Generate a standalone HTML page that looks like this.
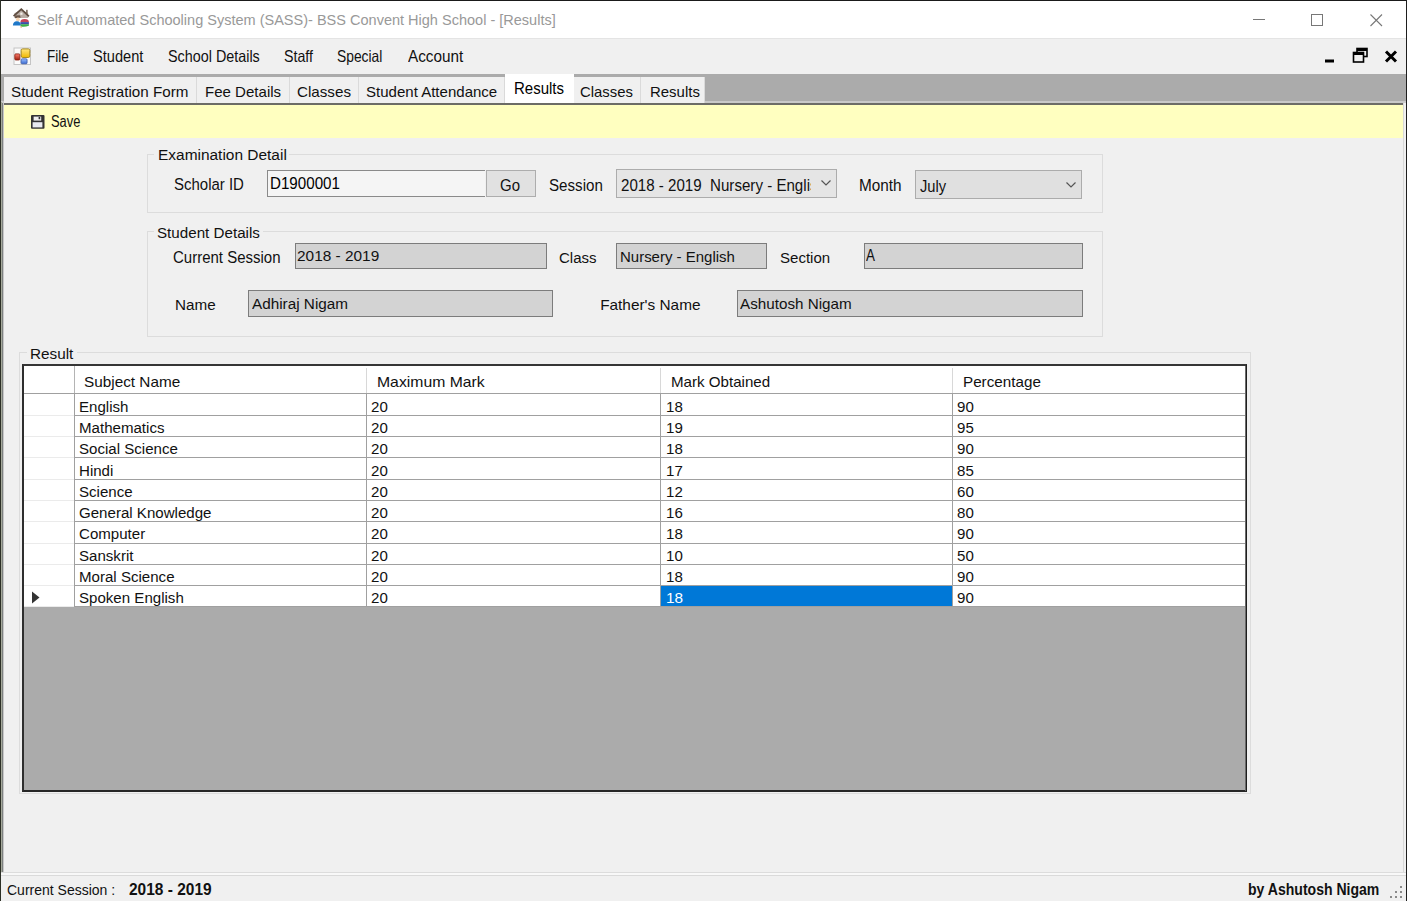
<!DOCTYPE html>
<html><head><meta charset="utf-8"><title>SASS Results</title>
<style>
html,body{margin:0;padding:0;}
body{width:1407px;height:901px;overflow:hidden;position:relative;background:#f0f0f0;font-family:"Liberation Sans",sans-serif;}
.r{position:absolute;}
.t{position:absolute;white-space:pre;transform-origin:0 0;}
</style></head><body>
<div class="r" style="left:0px;top:0px;width:1407px;height:39px;background:#fff;"></div>
<div class="r" style="left:1px;top:74px;width:1405px;height:800px;background:#ababab;"></div>
<div class="r" style="left:1px;top:38px;width:1405px;height:1px;background:#e4e4e4;"></div>
<svg class="r" style="left:0px;top:0px" width="40" height="38" viewBox="0 0 40 38">
<path d="M14.3 13.2 L14.3 18 L28.2 18 L28.2 13.2 L21.3 9.8 Z" fill="#b8aca4"/>
<path d="M13.6 16.2 L21.3 9.2 L28.9 16.4" fill="none" stroke="#5e4c40" stroke-width="1.8"/>
<rect x="26.2" y="9.8" width="1.4" height="3.8" fill="#6e5a4c"/>
<rect x="20.3" y="12.6" width="2.2" height="2.2" fill="#f4f0ea"/>
<path d="M15.2 15.6 L19.8 15.2 L20.8 17.4 L15 18.2 Z" fill="#6a5446"/>
<circle cx="17.9" cy="19.4" r="1.9" fill="#f3d4b4"/>
<path d="M12.9 25.6 Q12.9 21.4 16.9 21.2 Q20.9 21.4 20.9 25.6 Z" fill="#1f78c8"/>
<path d="M20.4 22.2 Q20.4 19.1 24.6 19.1 Q28.9 19.1 28.9 22.2 Z" fill="#c44458"/>
<rect x="20.4" y="22.1" width="8.5" height="2.3" fill="#3a4fa8"/>
<path d="M20.6 24.3 L28.9 24.3 L28.9 25.8 Q24.8 27.2 20.6 26.4 Z" fill="#3cb04a"/>
<rect x="20.4" y="26.4" width="1.6" height="1.2" fill="#e8b070"/>
</svg>
<span class="t" style="left:37.00px;top:11.97px;font-size:15.38px;line-height:15.38px;color:#999;transform:scaleX(0.9440);">Self Automated Schooling System (SASS)- BSS Convent High School - [Results]</span>
<svg class="r" style="left:1240px;top:5px" width="160" height="30" viewBox="0 0 160 30">
<line x1="13" y1="14.5" x2="25" y2="14.5" stroke="#777" stroke-width="1"/>
<rect x="71.5" y="9.5" width="11" height="11" fill="none" stroke="#777" stroke-width="1"/>
<line x1="130.5" y1="9.5" x2="142" y2="21" stroke="#777" stroke-width="1.1"/>
<line x1="142" y1="9.5" x2="130.5" y2="21" stroke="#777" stroke-width="1.1"/>
</svg>
<svg class="r" style="left:13px;top:47px" width="19" height="19" viewBox="0 0 19 19">
<defs><linearGradient id="gy" x1="0" y1="0" x2="0" y2="1"><stop offset="0" stop-color="#ffe680"/><stop offset="1" stop-color="#f0b800"/></linearGradient>
<linearGradient id="gb" x1="0" y1="0" x2="0" y2="1"><stop offset="0" stop-color="#9cc0ff"/><stop offset="1" stop-color="#3a6ad0"/></linearGradient>
<linearGradient id="gr" x1="0" y1="0" x2="0" y2="1"><stop offset="0" stop-color="#ff8070"/><stop offset="1" stop-color="#a02010"/></linearGradient></defs>
<rect x="1" y="1" width="16.5" height="16.5" fill="#fbfbfb" stroke="#c4c4c4" stroke-width="1"/>
<line x1="7.5" y1="1" x2="7.5" y2="17.5" stroke="#dcdcdc" stroke-width="0.8"/>
<line x1="1" y1="6.5" x2="17.5" y2="6.5" stroke="#e4e4e4" stroke-width="0.8"/>
<rect x="8.2" y="1.9" width="8.6" height="8.6" rx="1.5" fill="url(#gy)" stroke="#a88a20" stroke-width="1"/>
<rect x="1.8" y="6.9" width="5" height="6.1" rx="1" fill="url(#gr)" stroke="#8a2010" stroke-width="0.8"/>
<rect x="8.1" y="11.8" width="6" height="5" rx="1" fill="url(#gb)" stroke="#3050a0" stroke-width="0.7"/>
</svg>
<span class="t" style="left:46.90px;top:47.89px;font-size:16.31px;line-height:16.31px;color:#111;transform:scaleX(0.8303);">File</span>
<span class="t" style="left:92.65px;top:47.89px;font-size:16.31px;line-height:16.31px;color:#111;transform:scaleX(0.8953);">Student</span>
<span class="t" style="left:167.50px;top:47.89px;font-size:16.31px;line-height:16.31px;color:#111;transform:scaleX(0.8809);">School Details</span>
<span class="t" style="left:283.50px;top:47.89px;font-size:16.31px;line-height:16.31px;color:#111;transform:scaleX(0.8717);">Staff</span>
<span class="t" style="left:337.40px;top:47.89px;font-size:16.31px;line-height:16.31px;color:#111;transform:scaleX(0.8487);">Special</span>
<span class="t" style="left:407.55px;top:47.89px;font-size:16.31px;line-height:16.31px;color:#111;transform:scaleX(0.9380);">Account</span>
<svg class="r" style="left:1315px;top:44px" width="90" height="24" viewBox="0 0 90 24">
<rect x="10" y="15.5" width="9" height="3" fill="#000"/>
<rect x="42" y="4.5" width="10" height="8" fill="none" stroke="#000" stroke-width="1.6"/>
<rect x="38.5" y="8.5" width="10" height="9.5" fill="#f0f0f0" stroke="#000" stroke-width="1.6"/>
<rect x="38.5" y="8.5" width="10" height="2.5" fill="#000"/>
<rect x="42" y="4.5" width="10" height="2.5" fill="#000"/>
<path d="M71 7.5 L81 17.5 M81 7.5 L71 17.5" stroke="#000" stroke-width="3"/>
</svg>
<div class="r" style="left:1px;top:101px;width:1405px;height:2px;background:#c9c9c9;"></div>
<div class="r" style="left:4px;top:77px;width:193px;height:26px;background:#f0f0f0;border-right:1px solid #dadada;box-sizing:border-box;"></div>
<span class="t" style="left:11.25px;top:83.77px;font-size:15.38px;line-height:15.38px;color:#111;transform:scaleX(0.9887);">Student Registration Form</span>
<div class="r" style="left:197px;top:77px;width:93px;height:26px;background:#f0f0f0;border-right:1px solid #dadada;box-sizing:border-box;"></div>
<span class="t" style="left:205.20px;top:83.77px;font-size:15.38px;line-height:15.38px;color:#111;transform:scaleX(0.9789);">Fee Details</span>
<div class="r" style="left:290px;top:77px;width:69px;height:26px;background:#f0f0f0;border-right:1px solid #dadada;box-sizing:border-box;"></div>
<span class="t" style="left:296.50px;top:83.77px;font-size:15.38px;line-height:15.38px;color:#111;transform:scaleX(0.9874);">Classes</span>
<div class="r" style="left:359px;top:77px;width:146px;height:26px;background:#f0f0f0;border-right:1px solid #dadada;box-sizing:border-box;"></div>
<span class="t" style="left:365.85px;top:83.77px;font-size:15.38px;line-height:15.38px;color:#111;transform:scaleX(0.9777);">Student Attendance</span>
<div class="r" style="left:505px;top:74px;width:69px;height:31px;background:#fff;"></div>
<span class="t" style="left:514.15px;top:79.87px;font-size:16.46px;line-height:16.46px;color:#000;transform:scaleX(0.9129);">Results</span>
<div class="r" style="left:574px;top:77px;width:67px;height:26px;background:#f0f0f0;border-right:1px solid #dadada;box-sizing:border-box;"></div>
<span class="t" style="left:579.55px;top:83.77px;font-size:15.38px;line-height:15.38px;color:#111;transform:scaleX(0.9673);">Classes</span>
<div class="r" style="left:641px;top:77px;width:64px;height:26px;background:#f0f0f0;border-right:1px solid #dadada;box-sizing:border-box;"></div>
<span class="t" style="left:649.75px;top:83.77px;font-size:15.38px;line-height:15.38px;color:#111;transform:scaleX(0.9726);">Results</span>
<div class="r" style="left:1px;top:102px;width:1px;height:771px;background:#a6aa9c;"></div>
<div class="r" style="left:2px;top:104px;width:1403px;height:769px;background:#f0f0f0;"></div>
<div class="r" style="left:2px;top:103px;width:1403px;height:2px;background:#6c6c66;"></div>
<div class="r" style="left:2px;top:103px;width:1px;height:769px;background:#7d8080;"></div>
<div class="r" style="left:3px;top:103px;width:1px;height:769px;background:#c8c8c8;"></div>
<div class="r" style="left:1px;top:872px;width:1405px;height:1px;background:#dcdcdc;"></div>
<div class="r" style="left:1403px;top:103px;width:1px;height:769px;background:#d8d8d8;"></div>
<div class="r" style="left:1404px;top:103px;width:2px;height:769px;background:#f0f0f0;"></div>
<div class="r" style="left:4px;top:105px;width:1399px;height:33px;background:#ffffc0;"></div>
<svg class="r" style="left:30px;top:114px" width="16" height="16" viewBox="0 0 16 16">
<rect x="1" y="1" width="13.5" height="13.8" rx="1" fill="#333"/>
<rect x="3.6" y="2.6" width="7.6" height="4" fill="#eee"/>
<rect x="8.6" y="3" width="1.6" height="2.2" fill="#333"/>
<rect x="2.6" y="8.2" width="9.8" height="5.2" fill="#e8eaf0"/>
</svg>
<span class="t" style="left:51.10px;top:114.49px;font-size:15.60px;line-height:15.60px;color:#111;transform:scaleX(0.8264);">Save</span>
<div class="r" style="left:147px;top:154px;width:956px;height:59px;border:1px solid #dcdcdc;box-sizing:border-box;"></div>
<div class="r" style="left:154px;top:153px;width:135px;height:3px;background:#f0f0f0;"></div>
<span class="t" style="left:157.75px;top:148.04px;font-size:14.96px;line-height:14.96px;color:#111;transform:scaleX(1.0334);">Examination Detail</span>
<div class="r" style="left:147px;top:231px;width:956px;height:106px;border:1px solid #dcdcdc;box-sizing:border-box;"></div>
<div class="r" style="left:154px;top:230px;width:109px;height:3px;background:#f0f0f0;"></div>
<span class="t" style="left:157.15px;top:225.94px;font-size:14.96px;line-height:14.96px;color:#111;transform:scaleX(1.0147);">Student Details</span>
<div class="r" style="left:19px;top:352px;width:1232px;height:442px;border:1px solid #dcdcdc;box-sizing:border-box;"></div>
<div class="r" style="left:27px;top:351px;width:50px;height:3px;background:#f0f0f0;"></div>
<span class="t" style="left:30.30px;top:347.22px;font-size:14.39px;line-height:14.39px;color:#111;transform:scaleX(1.0641);">Result</span>
<span class="t" style="left:174.20px;top:176.91px;font-size:16.64px;line-height:16.64px;color:#111;transform:scaleX(0.9008);">Scholar ID</span>
<div class="r" style="left:267px;top:170px;width:218px;height:27px;background:#f5f5f5;border:1px solid #8a8a8a;box-sizing:border-box;border-right:none;"></div>
<span class="t" style="left:270.00px;top:175.99px;font-size:15.95px;line-height:15.95px;color:#000;transform:scaleX(0.9508);">D1900001</span>
<div class="r" style="left:486px;top:170px;width:50px;height:27px;background:#e1e1e1;border:1px solid #adadad;box-sizing:border-box;"></div>
<span class="t" style="left:499.50px;top:176.89px;font-size:17.26px;line-height:17.26px;color:#111;transform:scaleX(0.8682);">Go</span>
<span class="t" style="left:548.95px;top:176.89px;font-size:17.26px;line-height:17.26px;color:#111;transform:scaleX(0.8774);">Session</span>
<div class="r" style="left:616px;top:169px;width:221px;height:29px;background:#e5e5e5;border:1px solid #acacac;box-sizing:border-box;"></div>
<div class="r" style="left:617px;top:170px;width:194px;height:27px;overflow:hidden"><span class="t" style="left:4.00px;top:6.65px;font-size:16.24px;line-height:16.24px;color:#111;transform:scaleX(0.9308);">2018 - 2019  Nursery - Englis</span></div>
<svg class="r" style="left:819px;top:178px" width="14" height="10" viewBox="0 0 14 10"><path d="M2.5 2.5 L7 7 L11.5 2.5" fill="none" stroke="#555" stroke-width="1.2"/></svg>
<span class="t" style="left:859.20px;top:176.62px;font-size:17.10px;line-height:17.10px;color:#111;transform:scaleX(0.8960);">Month</span>
<div class="r" style="left:915px;top:170px;width:167px;height:29px;background:#e0e0e0;border:1px solid #acacac;box-sizing:border-box;"></div>
<span class="t" style="left:919.85px;top:178.51px;font-size:15.81px;line-height:15.81px;color:#111;transform:scaleX(0.9274);">July</span>
<svg class="r" style="left:1064px;top:180px" width="14" height="10" viewBox="0 0 14 10"><path d="M2.5 2.5 L7 7 L11.5 2.5" fill="none" stroke="#555" stroke-width="1.2"/></svg>
<span class="t" style="left:173.40px;top:249.81px;font-size:15.81px;line-height:15.81px;color:#111;transform:scaleX(0.9491);">Current Session</span>
<div class="r" style="left:295px;top:243px;width:252px;height:26px;background:#d3d3d3;border:1px solid #7c7c7c;box-sizing:border-box;"></div>
<span class="t" style="left:296.85px;top:248.30px;font-size:15.24px;line-height:15.24px;color:#111;transform:scaleX(1.0112);">2018 - 2019</span>
<span class="t" style="left:558.60px;top:250.30px;font-size:15.24px;line-height:15.24px;color:#111;transform:scaleX(0.9868);">Class</span>
<div class="r" style="left:616px;top:243px;width:151px;height:26px;background:#d3d3d3;border:1px solid #7c7c7c;box-sizing:border-box;"></div>
<span class="t" style="left:619.55px;top:248.82px;font-size:15.10px;line-height:15.10px;color:#111;transform:scaleX(0.9922);">Nursery - English</span>
<span class="t" style="left:780.10px;top:250.30px;font-size:15.24px;line-height:15.24px;color:#111;transform:scaleX(0.9876);">Section</span>
<div class="r" style="left:864px;top:243px;width:219px;height:26px;background:#d3d3d3;border:1px solid #7c7c7c;box-sizing:border-box;"></div>
<span class="t" style="left:866.00px;top:248.23px;font-size:15.67px;line-height:15.67px;color:#111;transform:scaleX(0.8573);">A</span>
<span class="t" style="left:174.65px;top:297.22px;font-size:15.10px;line-height:15.10px;color:#111;transform:scaleX(1.0096);">Name</span>
<div class="r" style="left:248px;top:290px;width:305px;height:27px;background:#d3d3d3;border:1px solid #7c7c7c;box-sizing:border-box;"></div>
<span class="t" style="left:251.55px;top:296.22px;font-size:15.10px;line-height:15.10px;color:#111;transform:scaleX(1.0135);">Adhiraj Nigam</span>
<span class="t" style="left:600.15px;top:297.07px;font-size:15.38px;line-height:15.38px;color:#111;">Father's Name</span>
<div class="r" style="left:737px;top:290px;width:346px;height:27px;background:#d3d3d3;border:1px solid #7c7c7c;box-sizing:border-box;"></div>
<span class="t" style="left:740.35px;top:296.17px;font-size:15.38px;line-height:15.38px;color:#111;transform:scaleX(0.9899);">Ashutosh Nigam</span>
<div class="r" style="left:22px;top:364px;width:1225px;height:428px;background:#ababab;border-left:2px solid #2e2e2e;border-top:2px solid #363636;border-right:1px solid #1e1e1e;border-bottom:2px solid #262626;box-sizing:border-box;"></div>
<div class="r" style="left:1245px;top:366px;width:1px;height:425px;background:#6a6a6a;"></div>
<div class="r" style="left:24px;top:366px;width:1221px;height:28px;background:#fff;"></div>
<div class="r" style="left:24px;top:394px;width:1221px;height:213px;background:#fff;"></div>
<div class="r" style="left:74px;top:366px;width:1px;height:28px;background:#b4b4b4;"></div>
<div class="r" style="left:366px;top:368px;width:1px;height:26px;background:#d8d8d8;"></div>
<div class="r" style="left:660px;top:368px;width:1px;height:26px;background:#d8d8d8;"></div>
<div class="r" style="left:952px;top:368px;width:1px;height:26px;background:#d8d8d8;"></div>
<div class="r" style="left:24px;top:393px;width:1221px;height:1px;background:#a0a0a0;"></div>
<div class="r" style="left:24px;top:415px;width:50px;height:1px;background:#ebebeb;"></div>
<div class="r" style="left:74px;top:415px;width:1171px;height:1px;background:#a0a0a0;"></div>
<div class="r" style="left:24px;top:436px;width:50px;height:1px;background:#ebebeb;"></div>
<div class="r" style="left:74px;top:436px;width:1171px;height:1px;background:#a0a0a0;"></div>
<div class="r" style="left:24px;top:457px;width:50px;height:1px;background:#ebebeb;"></div>
<div class="r" style="left:74px;top:457px;width:1171px;height:1px;background:#a0a0a0;"></div>
<div class="r" style="left:24px;top:479px;width:50px;height:1px;background:#ebebeb;"></div>
<div class="r" style="left:74px;top:479px;width:1171px;height:1px;background:#a0a0a0;"></div>
<div class="r" style="left:24px;top:500px;width:50px;height:1px;background:#ebebeb;"></div>
<div class="r" style="left:74px;top:500px;width:1171px;height:1px;background:#a0a0a0;"></div>
<div class="r" style="left:24px;top:521px;width:50px;height:1px;background:#ebebeb;"></div>
<div class="r" style="left:74px;top:521px;width:1171px;height:1px;background:#a0a0a0;"></div>
<div class="r" style="left:24px;top:543px;width:50px;height:1px;background:#ebebeb;"></div>
<div class="r" style="left:74px;top:543px;width:1171px;height:1px;background:#a0a0a0;"></div>
<div class="r" style="left:24px;top:564px;width:50px;height:1px;background:#ebebeb;"></div>
<div class="r" style="left:74px;top:564px;width:1171px;height:1px;background:#a0a0a0;"></div>
<div class="r" style="left:24px;top:585px;width:50px;height:1px;background:#ebebeb;"></div>
<div class="r" style="left:74px;top:585px;width:1171px;height:1px;background:#a0a0a0;"></div>
<div class="r" style="left:24px;top:606px;width:50px;height:1px;background:#ebebeb;"></div>
<div class="r" style="left:74px;top:606px;width:1171px;height:1px;background:#a0a0a0;"></div>
<div class="r" style="left:74px;top:394px;width:1px;height:212px;background:#a0a0a0;"></div>
<div class="r" style="left:366px;top:394px;width:1px;height:212px;background:#a0a0a0;"></div>
<div class="r" style="left:660px;top:394px;width:1px;height:212px;background:#a0a0a0;"></div>
<div class="r" style="left:952px;top:394px;width:1px;height:212px;background:#a0a0a0;"></div>
<div class="r" style="left:661px;top:586px;width:291px;height:20px;background:#0078d7;"></div>
<svg class="r" style="left:31px;top:590px" width="10" height="15" viewBox="0 0 10 15"><path d="M1 1.5 L8.5 7.5 L1 13.5 Z" fill="#333"/></svg>
<span class="t" style="left:84.20px;top:373.57px;font-size:15.38px;line-height:15.38px;color:#111;transform:scaleX(0.9958);">Subject Name</span>
<span class="t" style="left:376.50px;top:373.57px;font-size:15.38px;line-height:15.38px;color:#111;transform:scaleX(1.0245);">Maximum Mark</span>
<span class="t" style="left:670.70px;top:373.67px;font-size:15.38px;line-height:15.38px;color:#111;transform:scaleX(0.9830);">Mark Obtained</span>
<span class="t" style="left:962.55px;top:373.57px;font-size:15.38px;line-height:15.38px;color:#111;transform:scaleX(0.9900);">Percentage</span>
<div class="r" style="left:75px;top:395px;width:291px;height:20px;overflow:hidden"><span class="t" style="left:3.80px;top:4.00px;font-size:15.24px;line-height:15.24px;color:#111;transform:scaleX(0.9896);">English</span></div>
<div class="r" style="left:367px;top:395px;width:293px;height:20px;overflow:hidden"><span class="t" style="left:4.00px;top:4.00px;font-size:15.24px;line-height:15.24px;color:#111;transform:scaleX(0.9896);">20</span></div>
<div class="r" style="left:661px;top:395px;width:291px;height:20px;overflow:hidden"><span class="t" style="left:4.70px;top:4.00px;font-size:15.24px;line-height:15.24px;color:#111;transform:scaleX(0.9896);">18</span></div>
<div class="r" style="left:953px;top:395px;width:292px;height:20px;overflow:hidden"><span class="t" style="left:4.20px;top:4.00px;font-size:15.24px;line-height:15.24px;color:#111;transform:scaleX(0.9896);">90</span></div>
<div class="r" style="left:75px;top:416px;width:291px;height:20px;overflow:hidden"><span class="t" style="left:3.80px;top:4.30px;font-size:15.24px;line-height:15.24px;color:#111;transform:scaleX(0.9896);">Mathematics</span></div>
<div class="r" style="left:367px;top:416px;width:293px;height:20px;overflow:hidden"><span class="t" style="left:4.00px;top:4.30px;font-size:15.24px;line-height:15.24px;color:#111;transform:scaleX(0.9896);">20</span></div>
<div class="r" style="left:661px;top:416px;width:291px;height:20px;overflow:hidden"><span class="t" style="left:4.70px;top:4.30px;font-size:15.24px;line-height:15.24px;color:#111;transform:scaleX(0.9896);">19</span></div>
<div class="r" style="left:953px;top:416px;width:292px;height:20px;overflow:hidden"><span class="t" style="left:4.20px;top:4.30px;font-size:15.24px;line-height:15.24px;color:#111;transform:scaleX(0.9896);">95</span></div>
<div class="r" style="left:75px;top:437px;width:291px;height:20px;overflow:hidden"><span class="t" style="left:3.80px;top:4.10px;font-size:15.24px;line-height:15.24px;color:#111;transform:scaleX(0.9896);">Social Science</span></div>
<div class="r" style="left:367px;top:437px;width:293px;height:20px;overflow:hidden"><span class="t" style="left:4.00px;top:4.10px;font-size:15.24px;line-height:15.24px;color:#111;transform:scaleX(0.9896);">20</span></div>
<div class="r" style="left:661px;top:437px;width:291px;height:20px;overflow:hidden"><span class="t" style="left:4.70px;top:4.10px;font-size:15.24px;line-height:15.24px;color:#111;transform:scaleX(0.9896);">18</span></div>
<div class="r" style="left:953px;top:437px;width:292px;height:20px;overflow:hidden"><span class="t" style="left:4.20px;top:4.10px;font-size:15.24px;line-height:15.24px;color:#111;transform:scaleX(0.9896);">90</span></div>
<div class="r" style="left:75px;top:458px;width:291px;height:21px;overflow:hidden"><span class="t" style="left:3.80px;top:4.90px;font-size:15.24px;line-height:15.24px;color:#111;transform:scaleX(0.9896);">Hindi</span></div>
<div class="r" style="left:367px;top:458px;width:293px;height:21px;overflow:hidden"><span class="t" style="left:4.00px;top:4.90px;font-size:15.24px;line-height:15.24px;color:#111;transform:scaleX(0.9896);">20</span></div>
<div class="r" style="left:661px;top:458px;width:291px;height:21px;overflow:hidden"><span class="t" style="left:4.70px;top:4.90px;font-size:15.24px;line-height:15.24px;color:#111;transform:scaleX(0.9896);">17</span></div>
<div class="r" style="left:953px;top:458px;width:292px;height:21px;overflow:hidden"><span class="t" style="left:4.20px;top:4.90px;font-size:15.24px;line-height:15.24px;color:#111;transform:scaleX(0.9896);">85</span></div>
<div class="r" style="left:75px;top:480px;width:291px;height:20px;overflow:hidden"><span class="t" style="left:3.80px;top:4.20px;font-size:15.24px;line-height:15.24px;color:#111;transform:scaleX(0.9896);">Science</span></div>
<div class="r" style="left:367px;top:480px;width:293px;height:20px;overflow:hidden"><span class="t" style="left:4.00px;top:4.20px;font-size:15.24px;line-height:15.24px;color:#111;transform:scaleX(0.9896);">20</span></div>
<div class="r" style="left:661px;top:480px;width:291px;height:20px;overflow:hidden"><span class="t" style="left:4.70px;top:4.20px;font-size:15.24px;line-height:15.24px;color:#111;transform:scaleX(0.9896);">12</span></div>
<div class="r" style="left:953px;top:480px;width:292px;height:20px;overflow:hidden"><span class="t" style="left:4.20px;top:4.20px;font-size:15.24px;line-height:15.24px;color:#111;transform:scaleX(0.9896);">60</span></div>
<div class="r" style="left:75px;top:501px;width:291px;height:20px;overflow:hidden"><span class="t" style="left:3.80px;top:4.00px;font-size:15.24px;line-height:15.24px;color:#111;transform:scaleX(0.9896);">General Knowledge</span></div>
<div class="r" style="left:367px;top:501px;width:293px;height:20px;overflow:hidden"><span class="t" style="left:4.00px;top:4.00px;font-size:15.24px;line-height:15.24px;color:#111;transform:scaleX(0.9896);">20</span></div>
<div class="r" style="left:661px;top:501px;width:291px;height:20px;overflow:hidden"><span class="t" style="left:4.70px;top:4.00px;font-size:15.24px;line-height:15.24px;color:#111;transform:scaleX(0.9896);">16</span></div>
<div class="r" style="left:953px;top:501px;width:292px;height:20px;overflow:hidden"><span class="t" style="left:4.20px;top:4.00px;font-size:15.24px;line-height:15.24px;color:#111;transform:scaleX(0.9896);">80</span></div>
<div class="r" style="left:75px;top:522px;width:291px;height:21px;overflow:hidden"><span class="t" style="left:3.80px;top:4.30px;font-size:15.24px;line-height:15.24px;color:#111;transform:scaleX(0.9896);">Computer</span></div>
<div class="r" style="left:367px;top:522px;width:293px;height:21px;overflow:hidden"><span class="t" style="left:4.00px;top:4.30px;font-size:15.24px;line-height:15.24px;color:#111;transform:scaleX(0.9896);">20</span></div>
<div class="r" style="left:661px;top:522px;width:291px;height:21px;overflow:hidden"><span class="t" style="left:4.70px;top:4.30px;font-size:15.24px;line-height:15.24px;color:#111;transform:scaleX(0.9896);">18</span></div>
<div class="r" style="left:953px;top:522px;width:292px;height:21px;overflow:hidden"><span class="t" style="left:4.20px;top:4.30px;font-size:15.24px;line-height:15.24px;color:#111;transform:scaleX(0.9896);">90</span></div>
<div class="r" style="left:75px;top:544px;width:291px;height:20px;overflow:hidden"><span class="t" style="left:3.80px;top:4.10px;font-size:15.24px;line-height:15.24px;color:#111;transform:scaleX(0.9896);">Sanskrit</span></div>
<div class="r" style="left:367px;top:544px;width:293px;height:20px;overflow:hidden"><span class="t" style="left:4.00px;top:4.10px;font-size:15.24px;line-height:15.24px;color:#111;transform:scaleX(0.9896);">20</span></div>
<div class="r" style="left:661px;top:544px;width:291px;height:20px;overflow:hidden"><span class="t" style="left:4.70px;top:4.10px;font-size:15.24px;line-height:15.24px;color:#111;transform:scaleX(0.9896);">10</span></div>
<div class="r" style="left:953px;top:544px;width:292px;height:20px;overflow:hidden"><span class="t" style="left:4.20px;top:4.10px;font-size:15.24px;line-height:15.24px;color:#111;transform:scaleX(0.9896);">50</span></div>
<div class="r" style="left:75px;top:565px;width:291px;height:20px;overflow:hidden"><span class="t" style="left:3.80px;top:4.40px;font-size:15.24px;line-height:15.24px;color:#111;transform:scaleX(0.9896);">Moral Science</span></div>
<div class="r" style="left:367px;top:565px;width:293px;height:20px;overflow:hidden"><span class="t" style="left:4.00px;top:4.40px;font-size:15.24px;line-height:15.24px;color:#111;transform:scaleX(0.9896);">20</span></div>
<div class="r" style="left:661px;top:565px;width:291px;height:20px;overflow:hidden"><span class="t" style="left:4.70px;top:4.40px;font-size:15.24px;line-height:15.24px;color:#111;transform:scaleX(0.9896);">18</span></div>
<div class="r" style="left:953px;top:565px;width:292px;height:20px;overflow:hidden"><span class="t" style="left:4.20px;top:4.40px;font-size:15.24px;line-height:15.24px;color:#111;transform:scaleX(0.9896);">90</span></div>
<div class="r" style="left:75px;top:586px;width:291px;height:20px;overflow:hidden"><span class="t" style="left:3.80px;top:4.20px;font-size:15.24px;line-height:15.24px;color:#111;transform:scaleX(0.9896);">Spoken English</span></div>
<div class="r" style="left:367px;top:586px;width:293px;height:20px;overflow:hidden"><span class="t" style="left:4.00px;top:4.20px;font-size:15.24px;line-height:15.24px;color:#111;transform:scaleX(0.9896);">20</span></div>
<div class="r" style="left:661px;top:586px;width:291px;height:20px;overflow:hidden"><span class="t" style="left:4.70px;top:4.43px;font-size:15.55px;line-height:15.55px;color:#fff;transform:scaleX(0.9896);">18</span></div>
<div class="r" style="left:953px;top:586px;width:292px;height:20px;overflow:hidden"><span class="t" style="left:4.20px;top:4.20px;font-size:15.24px;line-height:15.24px;color:#111;transform:scaleX(0.9896);">90</span></div>
<div class="r" style="left:1px;top:873px;width:1405px;height:2px;background:#f8f8f8;"></div>
<div class="r" style="left:1px;top:875px;width:1405px;height:1px;background:#dadada;"></div>
<span class="t" style="left:6.70px;top:882.00px;font-size:15.24px;line-height:15.24px;color:#111;transform:scaleX(0.9190);">Current Session :</span>
<span class="t" style="left:128.85px;top:881.63px;font-size:15.67px;line-height:15.67px;color:#111;font-weight:bold;transform:scaleX(0.9884);">2018 - 2019</span>
<span class="t" style="left:1248.45px;top:881.63px;font-size:15.67px;line-height:15.67px;color:#111;font-weight:bold;transform:scaleX(0.8971);">by Ashutosh Nigam</span>
<div class="r" style="left:1400px;top:886px;width:2px;height:2px;background:#8a8a8a;"></div>
<div class="r" style="left:1395px;top:891px;width:2px;height:2px;background:#8a8a8a;"></div>
<div class="r" style="left:1400px;top:891px;width:2px;height:2px;background:#8a8a8a;"></div>
<div class="r" style="left:1390px;top:896px;width:2px;height:2px;background:#8a8a8a;"></div>
<div class="r" style="left:1395px;top:896px;width:2px;height:2px;background:#8a8a8a;"></div>
<div class="r" style="left:1400px;top:896px;width:2px;height:2px;background:#8a8a8a;"></div>
<div class="r" style="left:0px;top:0px;width:1407px;height:1px;background:#1a1a1a;"></div>
<div class="r" style="left:0px;top:0px;width:1px;height:901px;background:#2c2f26;"></div>
<div class="r" style="left:1406px;top:0px;width:1px;height:901px;background:#1e1e1e;"></div>
</body></html>
